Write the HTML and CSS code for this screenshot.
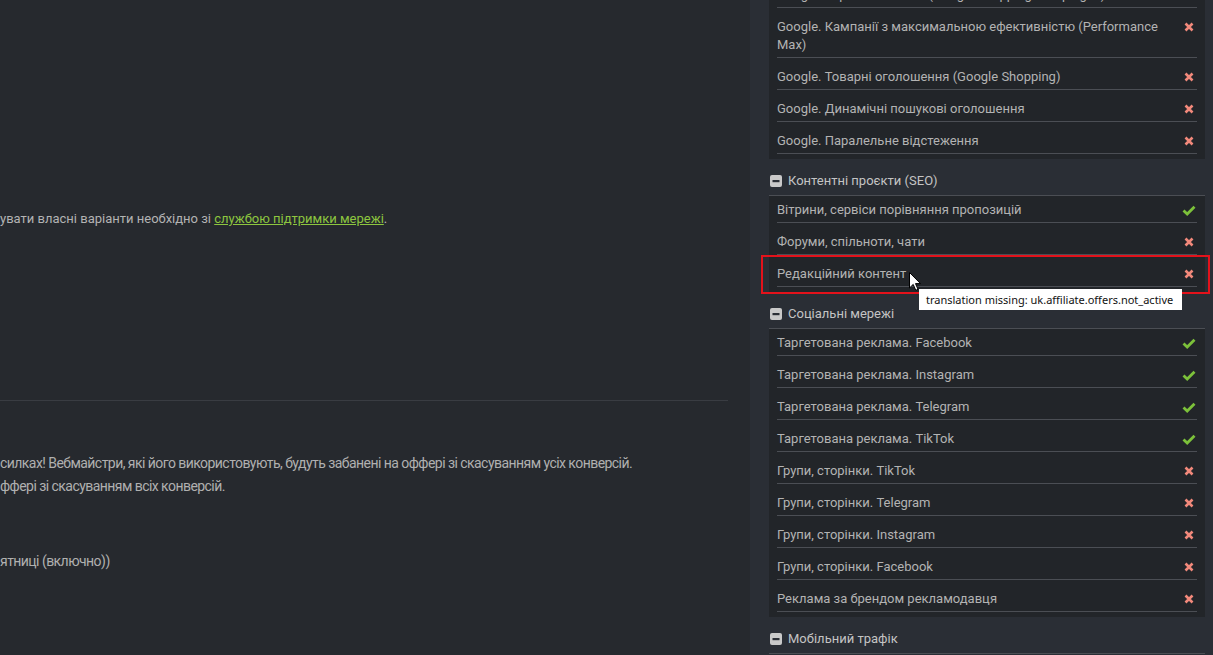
FILE: index.html
```html
<!DOCTYPE html>
<html lang="uk">
<head>
<meta charset="utf-8">
<title>Offer</title>
<link rel="stylesheet" href="styles.css">
</head>
<body>
<div class="layout">
  <main class="main">
    <p class="para p-support">увати власні варіанти необхідно зі <a class="link" href="#">службою підтримки мережі</a>.</p>
    <hr class="divider">
    <p class="para cond p-ban">силках! Вебмайстри, які його використовують, будуть забанені на оффері зі скасуванням усіх конверсій.</p>
    <p class="para cond p-ban2">ффері зі скасуванням всіх конверсій.</p>
    <p class="para cond p-days">ятниці (включно))</p>
  </main>
  <aside class="sidebar">
    <div class="panel panel-first">
      <div class="row"><span class="label">Google. Торгові кампанії (Google Shopping Campaigns)</span><span class="ic"><svg class="x" viewBox="0 0 10 10"><path d="M1.5 1.5L8.5 8.5M8.5 1.5L1.5 8.5"/></svg></span></div>
      <div class="row"><span class="label">Google. Кампанії з максимальною ефективністю (Performance Max)</span><span class="ic"><svg class="x" viewBox="0 0 10 10"><path d="M1.5 1.5L8.5 8.5M8.5 1.5L1.5 8.5"/></svg></span></div>
      <div class="row"><span class="label">Google. Товарні оголошення (Google Shopping)</span><span class="ic"><svg class="x" viewBox="0 0 10 10"><path d="M1.5 1.5L8.5 8.5M8.5 1.5L1.5 8.5"/></svg></span></div>
      <div class="row"><span class="label">Google. Динамічні пошукові оголошення</span><span class="ic"><svg class="x" viewBox="0 0 10 10"><path d="M1.5 1.5L8.5 8.5M8.5 1.5L1.5 8.5"/></svg></span></div>
      <div class="row"><span class="label">Google. Паралельне відстеження</span><span class="ic"><svg class="x" viewBox="0 0 10 10"><path d="M1.5 1.5L8.5 8.5M8.5 1.5L1.5 8.5"/></svg></span></div>
    </div>

    <div class="group-head"><svg class="minus" viewBox="0 0 12 12"><rect x="0" y="0" width="12" height="12" rx="2"/><rect class="bar" x="2.5" y="5" width="7" height="2.2"/></svg><span>Контентні проєкти (SEO)</span></div>
    <div class="panel">
      <div class="row"><span class="label">Вітрини, сервіси порівняння пропозицій</span><span class="ic"><svg class="ok" viewBox="0 0 14 11"><path d="M1.5 5.5L5.2 9L12.5 1.8"/></svg></span></div>
      <div class="row"><span class="label">Форуми, спільноти, чати</span><span class="ic"><svg class="x" viewBox="0 0 10 10"><path d="M1.5 1.5L8.5 8.5M8.5 1.5L1.5 8.5"/></svg></span></div>
      <div class="row"><span class="label">Редакційний контент</span><span class="ic"><svg class="x" viewBox="0 0 10 10"><path d="M1.5 1.5L8.5 8.5M8.5 1.5L1.5 8.5"/></svg></span></div>
    </div>

    <div class="group-head"><svg class="minus" viewBox="0 0 12 12"><rect x="0" y="0" width="12" height="12" rx="2"/><rect class="bar" x="2.5" y="5" width="7" height="2.2"/></svg><span>Соціальні мережі</span></div>
    <div class="panel">
      <div class="row"><span class="label">Таргетована реклама. Facebook</span><span class="ic"><svg class="ok" viewBox="0 0 14 11"><path d="M1.5 5.5L5.2 9L12.5 1.8"/></svg></span></div>
      <div class="row"><span class="label">Таргетована реклама. Instagram</span><span class="ic"><svg class="ok" viewBox="0 0 14 11"><path d="M1.5 5.5L5.2 9L12.5 1.8"/></svg></span></div>
      <div class="row"><span class="label">Таргетована реклама. Telegram</span><span class="ic"><svg class="ok" viewBox="0 0 14 11"><path d="M1.5 5.5L5.2 9L12.5 1.8"/></svg></span></div>
      <div class="row"><span class="label">Таргетована реклама. TikTok</span><span class="ic"><svg class="ok" viewBox="0 0 14 11"><path d="M1.5 5.5L5.2 9L12.5 1.8"/></svg></span></div>
      <div class="row"><span class="label">Групи, сторінки. TikTok</span><span class="ic"><svg class="x" viewBox="0 0 10 10"><path d="M1.5 1.5L8.5 8.5M8.5 1.5L1.5 8.5"/></svg></span></div>
      <div class="row"><span class="label">Групи, сторінки. Telegram</span><span class="ic"><svg class="x" viewBox="0 0 10 10"><path d="M1.5 1.5L8.5 8.5M8.5 1.5L1.5 8.5"/></svg></span></div>
      <div class="row"><span class="label">Групи, сторінки. Instagram</span><span class="ic"><svg class="x" viewBox="0 0 10 10"><path d="M1.5 1.5L8.5 8.5M8.5 1.5L1.5 8.5"/></svg></span></div>
      <div class="row"><span class="label">Групи, сторінки. Facebook</span><span class="ic"><svg class="x" viewBox="0 0 10 10"><path d="M1.5 1.5L8.5 8.5M8.5 1.5L1.5 8.5"/></svg></span></div>
      <div class="row"><span class="label">Реклама за брендом рекламодавця</span><span class="ic"><svg class="x" viewBox="0 0 10 10"><path d="M1.5 1.5L8.5 8.5M8.5 1.5L1.5 8.5"/></svg></span></div>
    </div>

    <div class="group-head"><svg class="minus" viewBox="0 0 12 12"><rect x="0" y="0" width="12" height="12" rx="2"/><rect class="bar" x="2.5" y="5" width="7" height="2.2"/></svg><span>Мобільний трафік</span></div>
  </aside>
</div>

<div class="highlight"></div>
<svg class="cursor" viewBox="0 0 12 19"><path d="M0.5 0.5V16L4.2 12.4L6.8 18.3L9 17.3L6.5 11.6H11.5Z"/></svg>
<div class="tooltip">translation missing: uk.affiliate.offers.not_active</div>
</body>
</html>
```
FILE: styles.css
```css
html, body {
  margin: 0;
  padding: 0;
}
body {
  width: 1213px;
  height: 655px;
  overflow: hidden;
  background: #26292e;
  font-family: Roboto, "Noto Sans", "Liberation Sans", sans-serif;
  font-size: 13px;
  color: #b3b3b3;
  position: relative;
}
.layout {
  display: flex;
  height: 655px;
}
.main {
  width: 750px;
  flex: none;
  display: flex;
  flex-direction: column;
}
.para {
  margin: 0;
  line-height: 18px;
  white-space: nowrap;
}
.p-support { margin-top: 210px; }
.link {
  color: #8dc63f;
  text-decoration: underline;
}
.divider {
  margin: 172px 0 0 0;
  width: 728px;
  border: 0;
  border-top: 1px solid #393c42;
  height: 0;
}
.cond {
  font-size: 14px;
  letter-spacing: -0.55px;
  color: #b0b0b0;
}
.p-ban { margin-top: 52px; line-height: 20px; }
.p-ban2 { margin-top: 3px; line-height: 20px; }
.p-days { margin-top: 55px; line-height: 20px; }

.sidebar {
  flex: 1;
  background: #2a2e35;
  padding: 0 8px 0 19px;
  display: flex;
  flex-direction: column;
}
.panel {
  background: #222529;
  display: flex;
  flex-direction: column;
  gap: 5px;
  padding-bottom: 5px;
}
.panel-first {
  margin-top: -19px;
}
.row {
  margin: 0 8px;
  display: flex;
  justify-content: space-between;
  align-items: flex-start;
  padding: 5px 0 3px;
  line-height: 18px;
  border-bottom: 1px solid #4b4e54;
}
.label {
  flex: 1;
  min-width: 0;
  padding-right: 18px;
}
.ic {
  flex: none;
  width: 14px;
  height: 18px;
  display: flex;
  align-items: center;
  justify-content: center;
  margin-right: 1px;
}
.x {
  width: 10px;
  height: 10px;
  fill: none;
  stroke: #f2897b;
  stroke-width: 2.6;
}
.ok {
  width: 14px;
  height: 11px;
  fill: none;
  stroke: #7cc13a;
  stroke-width: 2.8;
}
.group-head {
  display: flex;
  align-items: center;
  gap: 6px;
  padding: 13px 0 5px 1px;
  line-height: 18px;
  border-bottom: 1px solid #4b4e54;
  color: #c4c4c4;
}
.minus {
  width: 12px;
  height: 12px;
  fill: #c9c9c9;
}
.minus .bar {
  fill: #2a2e35;
}

.highlight {
  position: absolute;
  left: 761px;
  top: 255px;
  width: 445px;
  height: 35px;
  border: 2px solid #e3121b;
}
.cursor {
  position: absolute;
  left: 909px;
  top: 272px;
  width: 12px;
  height: 19px;
  fill: #ffffff;
  stroke: #000000;
  stroke-width: 1;
  stroke-linejoin: miter;
}
.tooltip {
  position: absolute;
  left: 919px;
  top: 289px;
  width: 256px;
  height: 21px;
  padding-left: 7px;
  background: #ffffff;
  color: #111111;
  font-family: "Noto Sans", "Open Sans", sans-serif;
  font-size: 11px;
  line-height: 21px;
  white-space: nowrap;
}
```
